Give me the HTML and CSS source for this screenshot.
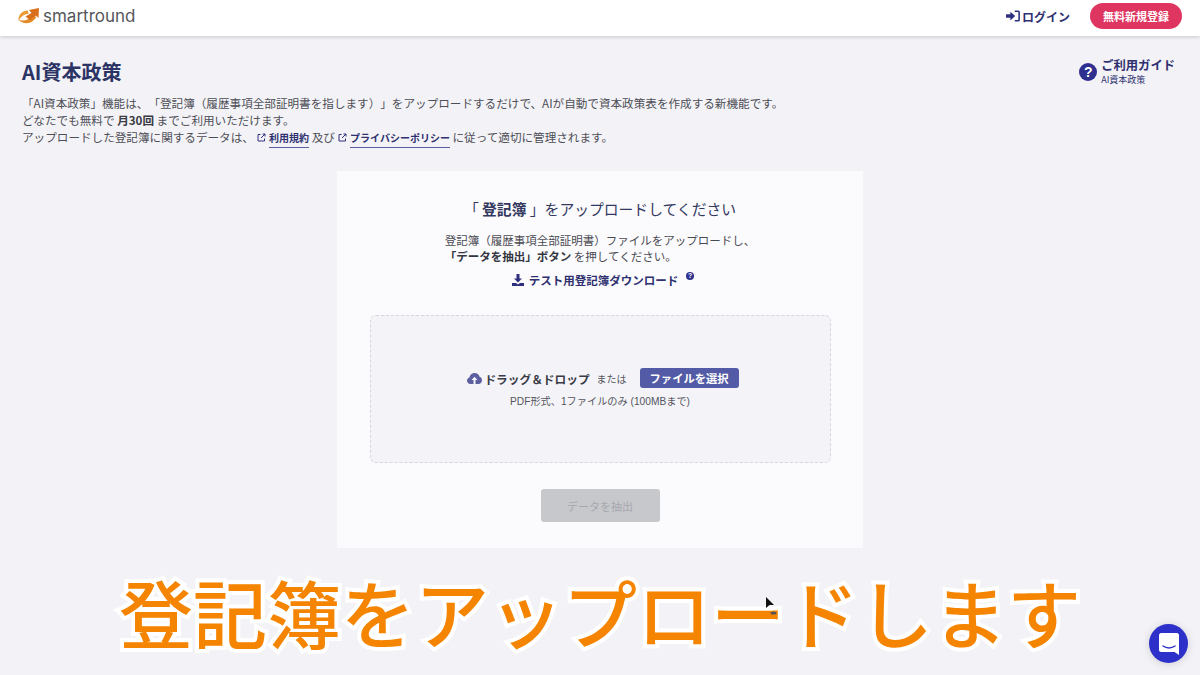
FILE: index.html
```html
<!DOCTYPE html>
<html lang="ja">
<head>
  <meta charset="UTF-8">
  <meta name="viewport" content="width=device-width, initial-scale=1.0">
  <title>AI資本政策 - smartround</title>
  <link rel="stylesheet" href="styles.css">
</head>
<body>

  <header class="header">
    <a class="logo">
      <svg class="logo-mark" width="22" height="18" viewBox="0 0 22 18">
        <path d="M0.500 14C0 8 4 3.500 10 3.500L10.500 7C6.500 6.500 3 9.500 0.500 14Z" fill="#ec9a35"/>
        <path d="M0.500 13C5 17 13 18.500 18.500 10L14.500 8C12 12.500 6.500 14.500 0.500 13Z" fill="#e58a24"/>
        <path d="M7.500 9.500L13.500 6L11 3L21 1L20.500 11L18 8.500L12 13Z" fill="#d96f1a"/>
      </svg>
      <span class="logo-text">smartround</span>
    </a>
    <nav class="header-nav">
      <a class="login">
        <svg width="14" height="12" viewBox="0 0 16 13">
          <path d="M0 4.500H5V1.500L10.500 6.500L5 11.500V8.500H0Z" fill="#2e2f7f"/>
          <path d="M10 1H14C14.800 1 15 1.500 15 2V11C15 11.500 14.800 12 14 12H10" fill="none" stroke="#2e2f7f" stroke-width="1.800"/>
        </svg>
        ログイン
      </a>
      <a class="signup-btn">無料新規登録</a>
    </nav>
  </header>

  <main class="main">
    <div class="title-row">
      <h1>AI資本政策</h1>
      <a class="guide">
        <span class="guide-icon">?</span>
        <span class="guide-text">
          <strong>ご利用ガイド</strong>
          <small>AI資本政策</small>
        </span>
      </a>
    </div>

    <div class="intro">
      <p>「AI資本政策」機能は、「登記簿（履歴事項全部証明書を指します）」をアップロードするだけで、AIが自動で資本政策表を作成する新機能です。</p>
      <p>どなたでも無料で <b>月30回</b> までご利用いただけます。</p>
      <p>アップロードした登記簿に関するデータは、
        <svg class="ext-icon" width="9" height="9" viewBox="0 0 9 9"><path d="M3.500 1.500H1V8H7.500V5.500M4 5L8 1M5.500 1H8V3.500" fill="none" stroke="#2e2f7f" stroke-width="1"/></svg>
        <a class="doc-link">利用規約</a> 及び
        <svg class="ext-icon" width="9" height="9" viewBox="0 0 9 9"><path d="M3.500 1.500H1V8H7.500V5.500M4 5L8 1M5.500 1H8V3.500" fill="none" stroke="#2e2f7f" stroke-width="1"/></svg>
        <a class="doc-link">プライバシーポリシー</a> に従って適切に管理されます。</p>
    </div>

    <section class="card">
      <h2>「 <b>登記簿</b> 」をアップロードしてください</h2>
      <p class="card-lead">登記簿（履歴事項全部証明書）ファイルをアップロードし、<br><b>「データを抽出」ボタン</b> を押してください。</p>
      <a class="test-link">
        <svg width="12" height="12" viewBox="0 0 12 12"><path d="M4.500 0H7.500V4.500H10L6 8.500L2 4.500H4.500ZM0 9H4L6 10.500L8 9H12V12H0Z" fill="#2e2f7f"/></svg>
        テスト用登記簿ダウンロード
        <span class="help-dot">?</span>
      </a>

      <div class="dropzone">
        <div class="drop-row">
          <svg width="15" height="11" viewBox="0 0 15 11"><path d="M3.500 11C1.500 11 0 9.500 0 7.700C0 6.200 1 5 2.400 4.600C2.800 2 5 0 7.700 0C10 0 12 1.500 12.600 3.700C14 4.200 15 5.600 15 7.200C15 9.300 13.300 11 11.500 11H8.500V7H10.500L7.500 3.800L4.500 7H6.500V11Z" fill="#5b5f9f"/></svg>
          <b class="drop-label">ドラッグ＆ドロップ</b>
          <span class="drop-or">または</span>
          <span class="select-btn">ファイルを選択</span>
        </div>
        <p class="drop-note">PDF形式、1ファイルのみ (100MBまで)</p>
      </div>

      <button class="extract-btn" disabled>データを抽出</button>
    </section>
  </main>

  <div class="caption">登記簿をアップロードします</div>

  <svg class="cursor" width="12" height="18" viewBox="0 0 12 18">
    <path d="M1 0L9 8H4.500L1 11Z" fill="#111"/>
    <ellipse cx="8.500" cy="16" rx="3" ry="1.500" fill="#555"/>
  </svg>

  <div class="chat-bubble">
    <svg width="20" height="22" viewBox="0 0 20 22">
      <path d="M2 0H18C19 0 20 1 20 2V22L15.500 19H2C1 19 0 18 0 17V2C0 1 1 0 2 0Z" fill="#fff"/>
      <path d="M4 13C7.500 15.500 12.500 15.500 16 13" fill="none" stroke="#3034c8" stroke-width="1.500" stroke-linecap="round"/>
    </svg>
  </div>

</body>
</html>
```

FILE: styles.css
```css
* {
  margin: 0;
  padding: 0;
  box-sizing: border-box;
}

html,
body {
  height: 100%;
  overflow: hidden;
}

body {
  font-family: "Noto Sans CJK JP", "Noto Sans", sans-serif;
  background-color: #f3f3f7;
  color: #4a4a52;
  font-size: 12px;
  text-spacing-trim: space-all;
}

.header {
  height: 36px;
  padding: 0 18px 4px;
  display: flex;
  align-items: center;
  justify-content: space-between;
  background-color: #fff;
  box-shadow: 0 1px 4px rgba(0, 0, 0, 0.18);
}

.logo {
  display: flex;
  align-items: center;
  gap: 3px;
}

.logo-text {
  font-family: "Inter", sans-serif;
  font-size: 17px;
  color: #55565c;
}

.header-nav {
  display: flex;
  align-items: center;
  gap: 20px;
}

.login {
  display: flex;
  align-items: center;
  gap: 2px;
  font-size: 12px;
  font-weight: 700;
  color: #2e3070;
}

.signup-btn {
  width: 92px;
  height: 26px;
  display: flex;
  align-items: center;
  justify-content: center;
  background-color: #de3561;
  border-radius: 13px;
  color: #fff;
  font-size: 11px;
  font-weight: 700;
}

.main {
  padding: 0 22px;
}

.title-row {
  height: 50px;
  padding-top: 22px;
  display: flex;
  justify-content: space-between;
  align-items: flex-start;
}

.title-row h1 {
  font-size: 20px;
  line-height: 28px;
  font-weight: 700;
  color: #2b3464;
}

.guide {
  margin-right: 3px;
  display: flex;
  align-items: center;
  gap: 4px;
}

.guide-icon {
  width: 18px;
  height: 18px;
  display: flex;
  align-items: center;
  justify-content: center;
  border-radius: 50%;
  background-color: #2e2f8f;
  color: #fff;
  font-family: "Liberation Sans", sans-serif;
  font-size: 14px;
  font-weight: 700;
}

.guide-text {
  display: flex;
  flex-direction: column;
}

.guide-text strong {
  font-size: 12.300px;
  line-height: 15px;
  color: #2e3070;
}

.guide-text small {
  font-size: 9px;
  line-height: 13px;
  color: #2e3070;
}

.intro {
  font-size: 11.600px;
  line-height: 17px;
  height: 76px;
  margin-top: 9px;
  color: #4e4e56;
}

.intro b {
  color: #3a3a42;
}

.ext-icon {
  margin: 0 0 0 1px;
}

.doc-link {
  font-size: 10px;
  font-weight: 700;
  color: #2e3070;
  border-bottom: 1px solid #5b5f9f;
  padding-bottom: 2px;
}

.card {
  width: 526px;
  height: 377px;
  margin: 0 auto;
  padding-top: 26px;
  display: flex;
  flex-direction: column;
  align-items: center;
  background-color: #fbfbfd;
}

.card h2 {
  font-size: 14.800px;
  line-height: 24px;
  font-weight: 400;
  color: #33385f;
}

.card-lead {
  margin-top: 11px;
  font-size: 11.500px;
  line-height: 16px;
  text-align: left;
  white-space: nowrap;
}

.card-lead b {
  color: #33353f;
}

.test-link {
  margin: 8px 0 0 6px;
  display: flex;
  align-items: center;
  gap: 5px;
  font-size: 11.500px;
  line-height: 16px;
  font-weight: 700;
  color: #2e3070;
}

.help-dot {
  width: 8px;
  height: 8px;
  margin: -8px 0 0 3px;
  display: flex;
  align-items: center;
  justify-content: center;
  border-radius: 50%;
  background-color: #2e2f8f;
  color: #fff;
  font-family: "Liberation Sans", sans-serif;
  font-size: 7px;
}

.dropzone {
  width: 461px;
  height: 148px;
  margin-top: 27px;
  padding-top: 52px;
  background-color: #f4f4f8;
  border: 1px dashed #d6d7de;
  border-radius: 6px;
  display: flex;
  flex-direction: column;
  align-items: center;
}

.drop-row {
  margin-left: 6px;
  display: flex;
  align-items: center;
}

.drop-label {
  margin-left: 2px;
  font-size: 11.700px;
  color: #3a3a46;
}

.drop-or {
  margin: 0 13px 0 7px;
  font-size: 10px;
  color: #55555e;
}

.select-btn {
  width: 99px;
  height: 20px;
  display: flex;
  align-items: center;
  justify-content: center;
  background-color: #535ba6;
  border-radius: 3px;
  color: #fff;
  font-size: 11.300px;
  font-weight: 700;
}

.drop-note {
  margin-top: 7px;
  font-family: "Liberation Sans", "Noto Sans CJK JP", sans-serif;
  font-size: 10.200px;
  line-height: 14px;
  color: #55555e;
}

.extract-btn {
  width: 119px;
  height: 33px;
  margin-top: 26px;
  background-color: #c6c8cc;
  border: none;
  border-radius: 3px;
  color: #a6a8ae;
  font-family: inherit;
  font-size: 11px;
}

.caption {
  position: absolute;
  left: 0;
  right: 0;
  top: 558px;
  text-align: center;
  font-size: 74px;
  font-weight: 500;
  line-height: 106px;
  white-space: nowrap;
  color: #f58400;
  -webkit-text-stroke: 8px #fff;
  paint-order: stroke fill;
}

.cursor {
  position: absolute;
  left: 765px;
  top: 597px;
}

.chat-bubble {
  position: absolute;
  left: 1149px;
  top: 624px;
  width: 39px;
  height: 39px;
  display: flex;
  align-items: center;
  justify-content: center;
  border-radius: 50%;
  background-color: #2e31c9;
  box-shadow: 0 1px 8px rgba(0, 0, 0, 0.15);
}
```
